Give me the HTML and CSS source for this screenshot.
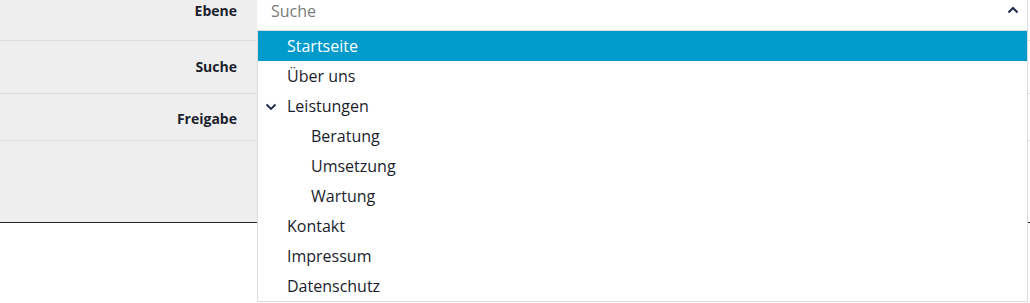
FILE: index.html
```html
<!DOCTYPE html>
<html lang="de">
<head>
    <meta charset="UTF-8">
    <meta name="viewport" content="width=device-width, initial-scale=1.0">
    <title>Seite bearbeiten</title>
    <link rel="stylesheet" href="styles.css">
</head>
<body>
    <div class="form">
        <div class="row row-ebene">
            <div class="label">Ebene</div>
            <div class="field">
                <div class="select">
                    <div class="select-input">
                        <span class="placeholder">Suche</span>
                        <svg class="caret" width="12" height="8" viewBox="0 0 12 8">
                            <polyline points="1.5,6.5 6,2 10.5,6.5" fill="none" stroke="#1d2a48" stroke-width="2"/>
                        </svg>
                    </div>
                    <ul class="options">
                        <li class="option active">Startseite</li>
                        <li class="option">Über uns</li>
                        <li class="option open">
                            <svg class="toggle" width="12" height="8" viewBox="0 0 12 8">
                                <polyline points="1.5,1.5 6,6 10.5,1.5" fill="none" stroke="#1d2a48" stroke-width="1.8"/>
                            </svg>
                            Leistungen
                        </li>
                        <li class="option child">Beratung</li>
                        <li class="option child">Umsetzung</li>
                        <li class="option child">Wartung</li>
                        <li class="option">Kontakt</li>
                        <li class="option">Impressum</li>
                        <li class="option">Datenschutz</li>
                    </ul>
                </div>
            </div>
        </div>
        <div class="row row-suche">
            <div class="label">Suche</div>
            <div class="field"></div>
        </div>
        <div class="row row-freigabe">
            <div class="label">Freigabe</div>
            <div class="field"></div>
        </div>
        <div class="row row-last">
            <div class="label"></div>
            <div class="field"></div>
        </div>
    </div>
</body>
</html>
```

FILE: styles.css
```css
html {
    height: 100%;
}

body {
    margin: 0;
    min-height: 100%;
    font-family: 'Open Sans', sans-serif;
    color: #1f2333;
    background: #fff;
}

.form {
    width: 1030px;
}

.row {
    display: flex;
    border-bottom: 1px solid #dcdcdc;
}

.label {
    width: 237px;
    padding-right: 20px;
    background-color: #eeeeee;
    font-size: 14px;
    font-weight: bold;
    text-align: right;
    color: #1c1f2e;
}

.field {
    flex: 1;
}

.row-ebene {
    height: 40px;
}

.row-ebene .label {
    padding-top: 1px;
}

.row-suche {
    height: 52px;
}

.row-suche .label {
    padding-top: 16px;
}

.row-freigabe {
    height: 46px;
}

.row-freigabe .label {
    padding-top: 15px;
}

.row-last {
    height: 81px;
    border-bottom: 1px solid #222;
}

.select {
    position: relative;
    width: 771px;
    z-index: 2;
}

.select-input {
    height: 31px;
    box-sizing: border-box;
    display: flex;
    align-items: center;
    justify-content: space-between;
    padding: 0 8px 0 14px;
    background: #fff;
    border-right: 1px solid #dcdcdc;
    border-bottom: 1px solid #dcdcdc;
}

.placeholder {
    font-size: 16px;
    color: #7a7a7a;
    margin-top: -8px;
}

.caret {
    margin-top: -10px;
}

.options {
    position: absolute;
    top: 31px;
    left: 0;
    right: 0;
    list-style: none;
    margin: 0;
    padding: 0;
    background: #fff;
    border: 1px solid #dcdcdc;
    border-top: none;
}

.option {
    height: 30px;
    box-sizing: border-box;
    padding-top: 1px;
    line-height: 29px;
    padding-left: 29px;
    font-size: 16px;
    color: #1a1d2c;
    position: relative;
}

.option.active {
    background-color: #009acb;
    color: #fff;
}

.option.child {
    padding-left: 53px;
}

.toggle {
    position: absolute;
    left: 7px;
    top: 12px;
}
```
